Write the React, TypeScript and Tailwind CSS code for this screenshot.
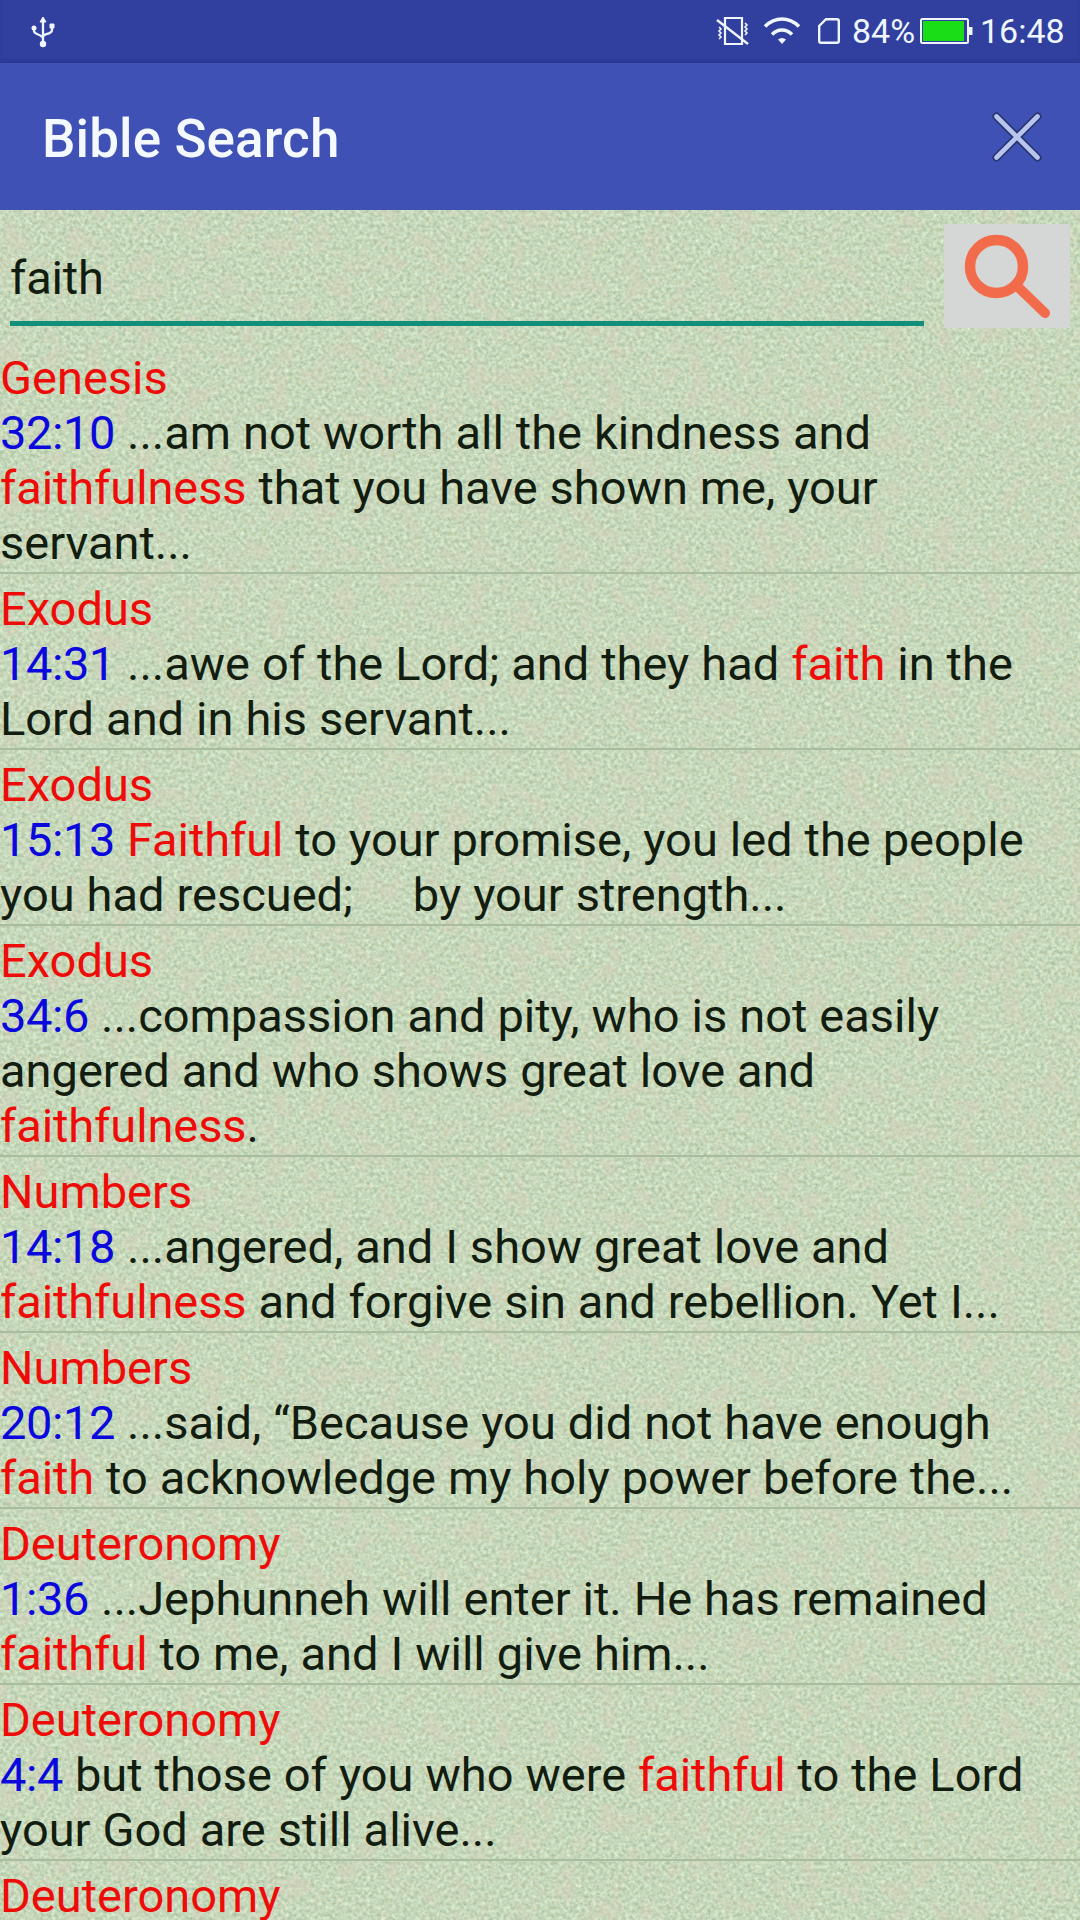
import React from "react";

type Tone = "plain" | "hit" | "ref";
type Segment = [Tone, string];
interface Result {
  book: string;
  lines: Segment[][];
}

const results: Result[] = [
  {
    book: "Genesis",
    lines: [
      [["ref", "32:10"], ["plain", " ...am not worth all the kindness and"]],
      [["hit", "faithfulness"], ["plain", " that you have shown me, your"]],
      [["plain", "servant..."]],
    ],
  },
  {
    book: "Exodus",
    lines: [
      [["ref", "14:31"], ["plain", " ...awe of the Lord; and they had "], ["hit", "faith"], ["plain", " in the"]],
      [["plain", "Lord and in his servant..."]],
    ],
  },
  {
    book: "Exodus",
    lines: [
      [["ref", "15:13"], ["plain", " "], ["hit", "Faithful"], ["plain", " to your promise, you led the people"]],
      [["plain", "you had rescued;     by your strength..."]],
    ],
  },
  {
    book: "Exodus",
    lines: [
      [["ref", "34:6"], ["plain", " ...compassion and pity, who is not easily"]],
      [["plain", "angered and who shows great love and"]],
      [["hit", "faithfulness"], ["plain", "."]],
    ],
  },
  {
    book: "Numbers",
    lines: [
      [["ref", "14:18"], ["plain", " ...angered, and I show great love and"]],
      [["hit", "faithfulness"], ["plain", " and forgive sin and rebellion. Yet I..."]],
    ],
  },
  {
    book: "Numbers",
    lines: [
      [["ref", "20:12"], ["plain", " ...said, “Because you did not have enough"]],
      [["hit", "faith"], ["plain", " to acknowledge my holy power before the..."]],
    ],
  },
  {
    book: "Deuteronomy",
    lines: [
      [["ref", "1:36"], ["plain", " ...Jephunneh will enter it. He has remained"]],
      [["hit", "faithful"], ["plain", " to me, and I will give him..."]],
    ],
  },
  {
    book: "Deuteronomy",
    lines: [
      [["ref", "4:4"], ["plain", " but those of you who were "], ["hit", "faithful"], ["plain", " to the Lord"]],
      [["plain", "your God are still alive..."]],
    ],
  },
  { book: "Deuteronomy", lines: [] },
];

const toneClass: Record<Tone, string> = {
  plain: "text-[#121d10]",
  hit: "tracking-[-0.1px] text-[#ee0c09]",
  ref: "tracking-[-0.4px] text-[#0a08dc]",
};

function UsbIcon() {
  return (
    <svg className="h-[32px] w-[26px]" viewBox="0 0 26 32" fill="none" stroke="#eef6ff" strokeWidth="2.300">
      <path d="M13 4v24M4 12v3c0 4 9 3 9 8M22 10v4c0 5-9 3-9 7" />
      <path d="M13 1l3 5h-6zM20 8h4v4h-4z" fill="#eef6ff" strokeWidth="1" />
      <circle cx="4" cy="12" r="2.5" fill="#eef6ff" stroke="none" />
      <circle cx="13" cy="28" r="3.2" fill="#eef6ff" stroke="none" />
    </svg>
  );
}

function VibrateOffIcon() {
  return (
    <svg className="h-[30px] w-[34px]" viewBox="0 0 34 30" fill="none" stroke="#eef6ff" strokeWidth="2.200">
      <path d="M9 2h17v26H9z" />
      <path d="M1 4l31 24" strokeWidth="2.400" />
      <path d="M3 11l2 2-2 2 2 2-2 2 2 2-2 2M29 7l2 2-2 2 2 2-2 2 2 2-2 2" strokeWidth="1.6" />
    </svg>
  );
}

function WifiIcon() {
  return (
    <svg className="h-[28px] w-[36px]" viewBox="0 0 36 28" fill="none" stroke="#eef6ff" strokeWidth="3.6">
      <path d="M1 9.500C11-.5 25-.5 35 9.500" />
      <path d="M8 17.500c6-6 14-6 20 0" />
      <path d="M14 22.500q4-3 8 0l-4 4.500z" fill="#eef6ff" stroke="none" />
    </svg>
  );
}

function SimIcon() {
  return (
    <svg className="h-[26px] w-[22px]" viewBox="0 0 22 26" fill="none" stroke="#eef6ff" strokeWidth="2.4">
      <path d="M8 1.200h11q1.800 0 1.800 1.800v20q0 1.800-1.800 1.800H3q-1.800 0-1.800-1.800V8z" />
    </svg>
  );
}

function BatteryIcon() {
  return (
    <svg className="h-[26px] w-[53px]" viewBox="0 0 53 26">
      <rect x="1" y="1" width="47" height="24" rx="1.500" fill="none" stroke="#eef6ff" strokeWidth="2" />
      <rect x="3" y="3" width="41" height="20" fill="#1bdd17" />
      <rect x="49" y="9" width="3.500" height="8" fill="#eef6ff" />
    </svg>
  );
}

function PaperTexture() {
  return (
    <svg className="absolute inset-0 h-full w-full" aria-hidden="true">
      <defs>
        <filter id="grain" x="0" y="0" width="100%" height="100%" colorInterpolationFilters="sRGB">
          <feTurbulence type="fractalNoise" baseFrequency="0.27" numOctaves="3" seed="7" result="fine" />
          <feColorMatrix
            in="fine"
            type="matrix"
            values="0.30 0.08 0 0 0.586  0.28 0 0 0 0.707  0.30 -0.06 0 0 0.610  0 0 0 0 1"
          />
        </filter>
        <filter id="blotches" x="0" y="0" width="100%" height="100%" colorInterpolationFilters="sRGB">
          <feTurbulence type="fractalNoise" baseFrequency="0.045" numOctaves="4" seed="3" />
          <feColorMatrix type="matrix" values="0 0 0 0 0.850  0 0 0 0 0.810  0 0 0 0 0.730  4 0 0 0 -1.950" />
        </filter>
      </defs>
      <rect width="100%" height="100%" filter="url(#grain)" />
      <rect width="100%" height="100%" filter="url(#blotches)" opacity="0.4" />
    </svg>
  );
}

export default function App() {
  return (
    <div className="flex h-[1920px] w-[1080px] flex-col overflow-hidden bg-[#c6dbb9] font-['Roboto',sans-serif]">
      <header>
        <div className="flex h-[63px] items-center bg-[#313f9f] pb-[2px] pl-[30px] pr-[17px] text-[34px] leading-none text-[#eef6ff] shadow-[inset_0_-3px_3px_#2c3993]">
          <span className="flex pt-[2px]"><UsbIcon /></span>
          <div className="ml-auto flex items-center">
            <VibrateOffIcon />
            <span className="ml-[14px] flex"><WifiIcon /></span>
            <span className="ml-[18px] flex"><SimIcon /></span>
            <span className="ml-[12px] w-[62px]">84%</span>
            <span className="ml-[6px] flex"><BatteryIcon /></span>
            <span className="ml-[7px] w-[83px]">16:48</span>
          </div>
        </div>
        <div className="flex h-[147px] items-center justify-between bg-[#4051b5] pl-[42px] pr-[36px]">
          <h1 className="pt-[6px] text-[53px] font-medium leading-none tracking-[0.1px] text-[#f4f9ff]">Bible Search</h1>
          <button aria-label="Close" className="flex">
            <svg className="h-[54px] w-[54px]" viewBox="0 0 54 54" fill="none" strokeLinecap="round">
              <path d="M6.500 6.500l41 41M47.500 6.500l-41 41" stroke="#27376f" strokeWidth="8" />
              <path d="M6.500 6.500l41 41M47.500 6.500l-41 41" stroke="#b9c4ef" strokeWidth="4.600" />
            </svg>
          </button>
        </div>
      </header>

      <main className="relative min-h-0 flex-1 overflow-hidden">
        <PaperTexture />
        <div className="relative">
          <div className="flex h-[133px] items-start px-[10px]">
            <div className="mt-[40px] h-[76px] w-[914px] border-b-[5px] border-[#128f78] text-[47px] leading-[55px] tracking-[-0.2px] text-[#121d10]">
              faith
            </div>
            <button aria-label="Search" className="ml-[20px] mt-[14px] flex h-[104px] w-[126px] bg-[#d5d6d6]">
              <svg className="h-[104px] w-[126px]" viewBox="0 0 126 104" fill="none" stroke="#f26b4b">
                <circle cx="52.500" cy="42.500" r="26.500" strokeWidth="10.500" />
                <path d="M73 62L101 89" strokeWidth="10" strokeLinecap="round" />
              </svg>
            </button>
          </div>
          <ul className="text-[47px] leading-[55px] [word-spacing:0.3px]">
            {results.map((result, index) => (
              <li key={index} className="border-b-2 border-[#a8bc9e] pb-[2px] pt-[7px]">
                <div className="whitespace-pre text-[#ee0c09]">{result.book}</div>
                {result.lines.map((line, row) => (
                  <div key={row} className="whitespace-pre">
                    {line.map(([tone, text], part) => (
                      <span key={part} className={toneClass[tone]}>{text}</span>
                    ))}
                  </div>
                ))}
              </li>
            ))}
          </ul>
        </div>
      </main>
    </div>
  );
}
